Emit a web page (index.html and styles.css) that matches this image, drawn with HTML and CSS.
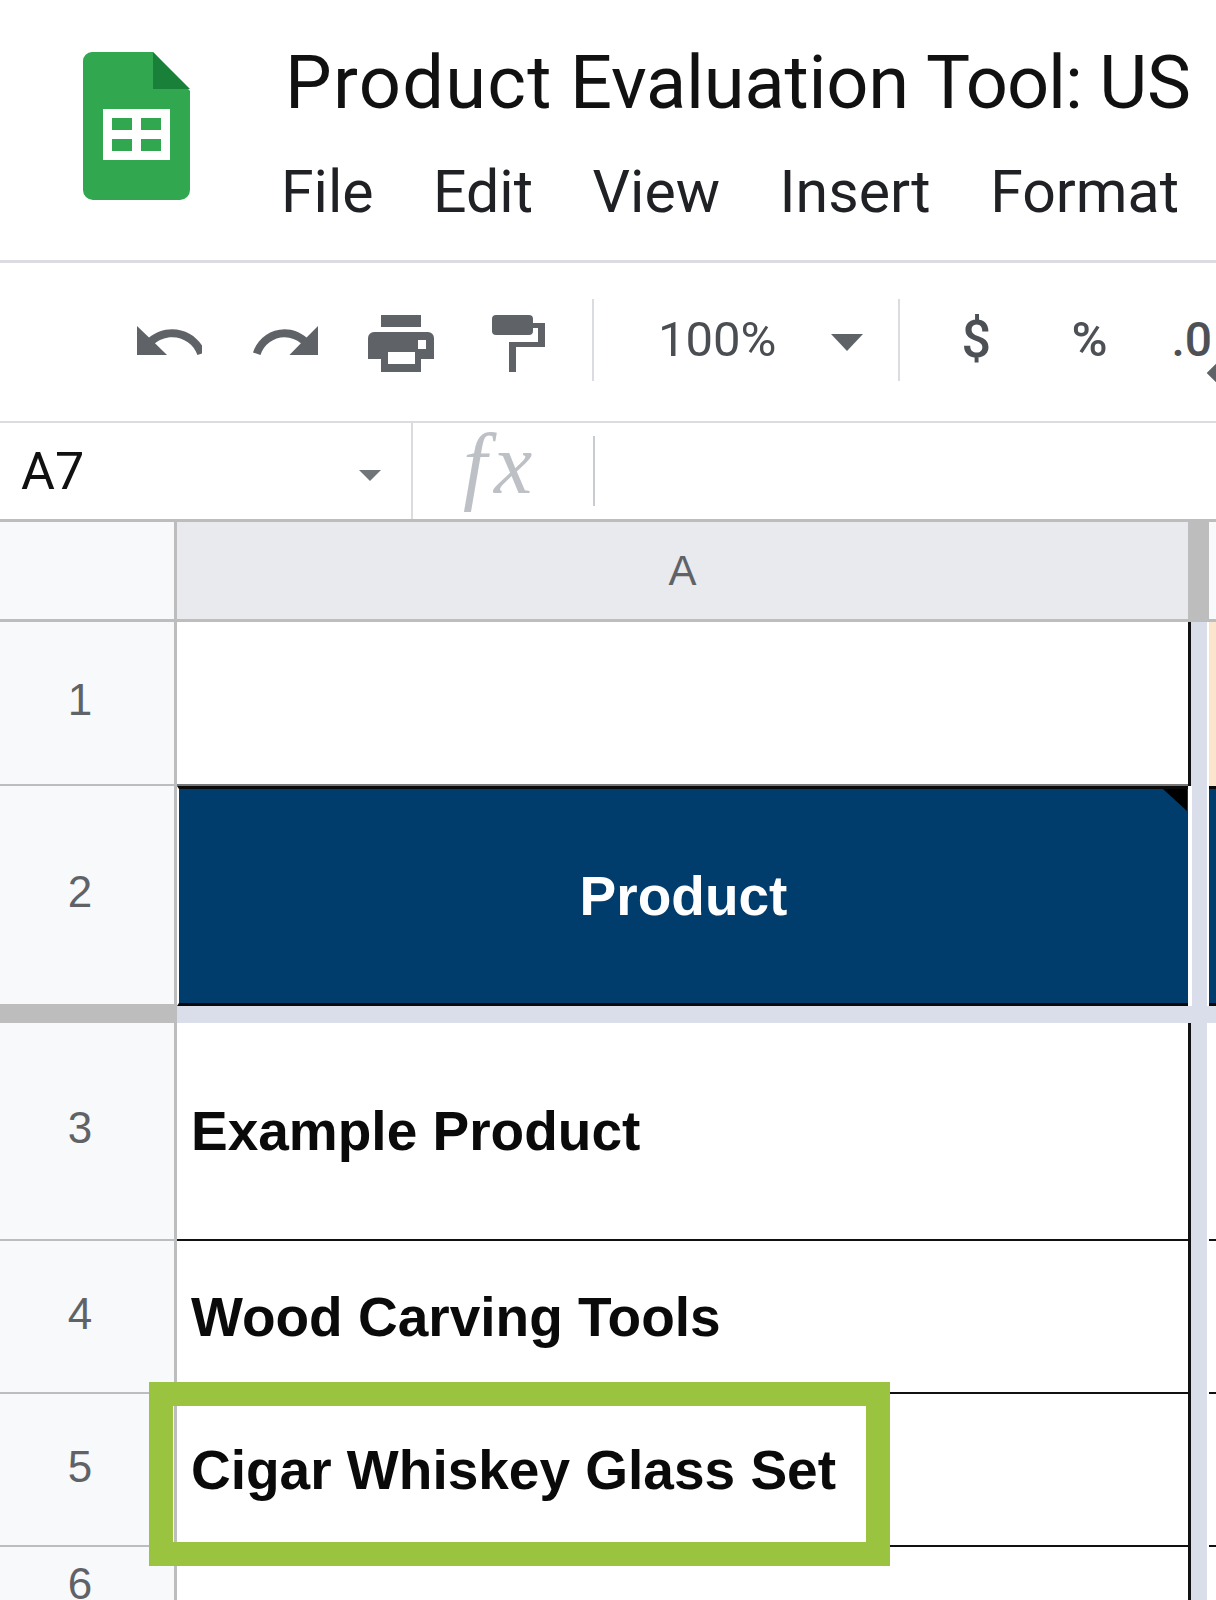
FILE: index.html
```html
<!DOCTYPE html>
<html lang="en">
<head>
<meta charset="utf-8">
<title>Product Evaluation Tool: US</title>
<link rel="stylesheet" href="styles.css">
</head>
<body>
<div class="page">
  <header class="title-bar">
    <svg class="logo" viewBox="0 0 107 148" aria-hidden="true">
      <path d="M9 0H70L107 39V138a10 10 0 0 1-10 10H10a10 10 0 0 1-10-10V9a9 9 0 0 1 9-9z" fill="#31a750"/>
      <path d="M70 0L107 37H70z" fill="#188038"/>
      <path fill-rule="evenodd" fill="#fff" d="M20 57H87V108H20zM29 66V78H49V66zM58 66V78H78V66zM29 87V99H49V87zM58 87V99H78V87z"/>
    </svg>
    <div class="title-col">
      <div class="doc-title"><span class="title-wide">Product</span> Evaluation <span class="title-tight">Tool:</span> US</div>
      <nav class="menu">
        <span>File</span><span>Edit</span><span>View</span><span>Insert</span><span>Format</span>
      </nav>
    </div>
  </header>

  <div class="toolbar">
    <svg class="ico ico-undo" viewBox="2 7 19.47 9" preserveAspectRatio="none" aria-hidden="true"><path d="M12.5 8c-2.65 0-5.05.99-6.9 2.6L2 7v9h9l-3.62-3.62c1.39-1.16 3.16-1.88 5.12-1.88 3.54 0 6.55 2.31 7.6 5.5l2.37-.78C21.08 11.03 17.15 8 12.5 8z"/></svg>
    <svg class="ico ico-redo" viewBox="1.54 7 20.46 9" preserveAspectRatio="none" aria-hidden="true"><path d="M18.4 10.6C16.55 8.99 14.15 8 11.5 8c-4.65 0-8.58 3.03-9.96 7.22L3.9 16c1.05-3.19 4.05-5.5 7.6-5.5 1.95 0 3.73.72 5.12 1.88L13 16h9V7l-3.6 3.6z"/></svg>
    <svg class="ico ico-print" viewBox="0 0 66 57" aria-hidden="true"><path fill-rule="evenodd" d="M13 0H53V12H13zM0 44V23a6 6 0 0 1 6-6H60a6 6 0 0 1 6 6V44H53V57H13V44zM20 37V49H47V37zM50 25V34H58V25z"/></svg>
    <svg class="ico ico-paint" viewBox="0 0 53 57" aria-hidden="true"><rect width="41" height="20" rx="4"/><path d="M41 8H53V32H24V57H17V27H46V13H41z"/></svg>
    <span class="tool-sep sep-one"></span>
    <span class="zoom-val">100%</span>
    <span class="caret caret-zoom"></span>
    <span class="tool-sep sep-two"></span>
    <span class="tool-text dollar">$</span>
    <span class="tool-text percent">%</span>
    <span class="tool-text decimal">.0<i class="diamond"></i></span>
  </div>

  <div class="formula-bar">
    <span class="cell-ref">A7</span>
    <span class="caret caret-ref"></span>
    <span class="fx-sep fx-sep-tall"></span>
    <span class="fx">fx</span>
    <span class="fx-sep fx-sep-short"></span>
  </div>

  <div class="sheet">
    <div class="corner"></div>
    <div class="col-head">A</div>
    <div class="col-resize"></div>
    <div class="col-head-next"></div>

    <div class="row-head">1</div>
    <div class="cell cell-blank"></div>
    <div class="freeze-v"></div>
    <div class="next next-peach"></div>

    <div class="row-head row-head-freeze">2</div>
    <div class="cell-title">Product</div>
    <div class="freeze-v freeze-v-white"></div>
    <div class="next next-navy"></div>

    <div class="freeze-grey"></div>
    <div class="freeze-h"></div>

    <div class="row-head">3</div>
    <div class="cell">Example Product</div>
    <div class="freeze-v"></div>
    <div class="next"></div>

    <div class="row-head">4</div>
    <div class="cell">Wood Carving Tools</div>
    <div class="freeze-v"></div>
    <div class="next"></div>

    <div class="row-head">5</div>
    <div class="cell">Cigar Whiskey Glass Set</div>
    <div class="freeze-v"></div>
    <div class="next"></div>

    <div class="row-head">6</div>
    <div class="cell"></div>
    <div class="freeze-v"></div>
    <div class="next"></div>
  </div>

  <div class="highlight"></div>
</div>
</body>
</html>
```

FILE: styles.css
```css
* { box-sizing: border-box; }
html, body { margin: 0; padding: 0; background: #fff; }
.page {
  position: relative;
  width: 1216px;
  height: 1600px;
  overflow: hidden;
  font-family: Roboto, "Liberation Sans", sans-serif;
}

/* Title bar */
.title-bar {
  display: flex;
  height: 260px;
  padding-left: 83px;
}
.logo { width: 107px; height: 148px; margin-top: 52px; flex: none; }
.title-col { margin-left: 91px; flex: none; }
.doc-title {
  margin-top: 37px;
  margin-left: 4px;
  font-size: 74px;
  line-height: 92px;
  letter-spacing: -0.2px;
  word-spacing: -1px;
  color: #111;
  white-space: nowrap;
}
.title-wide { letter-spacing: 1.3px; }
.title-tight { letter-spacing: -1px; }
.menu {
  display: flex;
  gap: 59.5px;
  margin-top: 29px;
  font-size: 59px;
  line-height: 68px;
  color: #202124;
  white-space: nowrap;
}

/* Toolbar */
.toolbar {
  display: flex;
  align-items: center;
  height: 161px;
  padding: 0 0 4px 137px;
  border-top: 3px solid #dadce0;
  overflow: hidden;
  color: #4d5156;
}
.ico { flex: none; fill: #5f6368; margin-top: 6px; }
.ico-undo, .ico-redo { width: 65px; height: 29px; margin-top: 0; }
.ico-redo { margin-left: 51px; }
.ico-print { width: 66px; height: 57px; margin-left: 50px; }
.ico-paint { width: 53px; height: 57px; margin-left: 58px; }
.tool-sep { flex: none; width: 2px; height: 82px; background: #dadce0; }
.sep-one { margin-left: 47px; }
.sep-two { margin-left: 35px; }
.zoom-val {
  flex: none;
  margin-left: 64px;
  font-size: 49px;
  line-height: 56px;
  color: #4a4d52;
}
.caret {
  flex: none;
  width: 0;
  height: 0;
  border-style: solid;
  border-color: #5f6368 transparent transparent;
}
.caret-zoom { margin-left: 54px; border-width: 17px 16px 0; margin-top: 4px; }
.tool-text { flex: none; font-size: 48px; line-height: 56px; font-weight: 500; }
.dollar { margin-left: 62px; width: 28px; font-size: 52px; }
.percent { margin-left: 82px; font-size: 49px; width: 38px; }
.decimal { position: relative; margin-left: 62px; }
.diamond {
  position: absolute;
  left: 38px;
  top: 53px;
  width: 16px;
  height: 16px;
  background: #5f6368;
  transform: rotate(45deg);
}

/* Formula bar */
.formula-bar {
  display: flex;
  align-items: center;
  height: 98px;
  padding-left: 21px;
  border-top: 2px solid #dadce0;
}
.cell-ref { flex: none; width: 338px; font-size: 52px; color: #111; }
.caret-ref { border-width: 11px 11px 0; margin-top: 8px; border-top-color: #70757a; }
.fx-sep { flex: none; width: 2px; background: #dadce0; }
.fx-sep-tall { height: 96px; margin-left: 30px; }
.fx-sep-short { height: 70px; margin-left: 55px; background: #c8cbcf; }
.fx {
  flex: none;
  width: 75px;
  margin-left: 50px;
  margin-top: -14px;
  font-family: "Liberation Serif", serif;
  font-style: italic;
  font-size: 86px;
  letter-spacing: 7px;
  line-height: 90px;
  color: #bdc1c6;
}

/* Sheet grid */
.sheet {
  display: grid;
  grid-template-columns: 177px 1011px 21px 7px;
  grid-template-rows: 103px 164px 220px 17px 218px 153px 153px 82px;
}
.corner {
  background: #f8f9fa;
  border-top: 3px solid #bdbdbd;
  border-right: 3px solid #bdbdbd;
  border-bottom: 3px solid #bdbdbd;
}
.col-head {
  display: flex;
  align-items: center;
  justify-content: center;
  background: #e8eaed;
  border-top: 3px solid #bdbdbd;
  border-bottom: 3px solid #bdbdbd;
  font-family: "Liberation Sans", sans-serif;
  font-size: 42px;
  color: #5f6368;
}
.col-resize { background: #bdbdbd; }
.col-head-next {
  background: #f8f9fa;
  border-top: 3px solid #bdbdbd;
  border-bottom: 3px solid #bdbdbd;
}
.row-head {
  display: flex;
  align-items: center;
  justify-content: center;
  padding: 0 14px 6px 0;
  background: #f8f9fa;
  border-right: 3px solid #bdbdbd;
  border-bottom: 2px solid #bdbdbd;
  font-family: "Liberation Sans", sans-serif;
  font-size: 44px;
  color: #5f6368;
}
.cell {
  display: flex;
  align-items: center;
  padding-left: 14px;
  background: #fff;
  border-bottom: 2px solid #111;
  font-family: "Liberation Sans", sans-serif;
  font-weight: 700;
  font-size: 55px;
  color: #0a0a0a;
  white-space: nowrap;
}
.cell-blank { border-bottom-color: #777; }
.cell-title {
  position: relative;
  display: flex;
  align-items: center;
  justify-content: center;
  background: #003c6c;
  border-top: 3px solid #0a0a0a;
  border-bottom: 3px solid #0a0a0a;
  border-left: 2px solid #fff;
  font-family: "Liberation Sans", sans-serif;
  font-weight: 700;
  font-size: 55px;
  color: #fff;
}
.cell-title::after {
  content: "";
  position: absolute;
  top: 0;
  right: 1px;
  width: 24px;
  height: 22px;
  background: #000;
  clip-path: polygon(0 0, 100% 0, 100% 100%);
}
.freeze-v {
  background: #d9deea;
  border-left: 3px solid #111;
  border-right: 2px solid #fff;
}
.freeze-v-white { border-left: 4px solid #fff; }
.next { background: #fff; border-bottom: 2px solid #111; }
.next-peach { background: #fce5cd; border-bottom: 0; }
.next-navy { background: #003c6c; border-top: 3px solid #0a0a0a; border-bottom: 3px solid #0a0a0a; }
.freeze-grey { background: #bdbdbd; }
.freeze-h { grid-column: 2 / -1; background: #d9deea; }

/* Annotation overlay */
.highlight {
  position: absolute;
  left: 149px;
  top: 1382px;
  width: 741px;
  height: 184px;
  border: 24px solid #9ac43f;
}
```
